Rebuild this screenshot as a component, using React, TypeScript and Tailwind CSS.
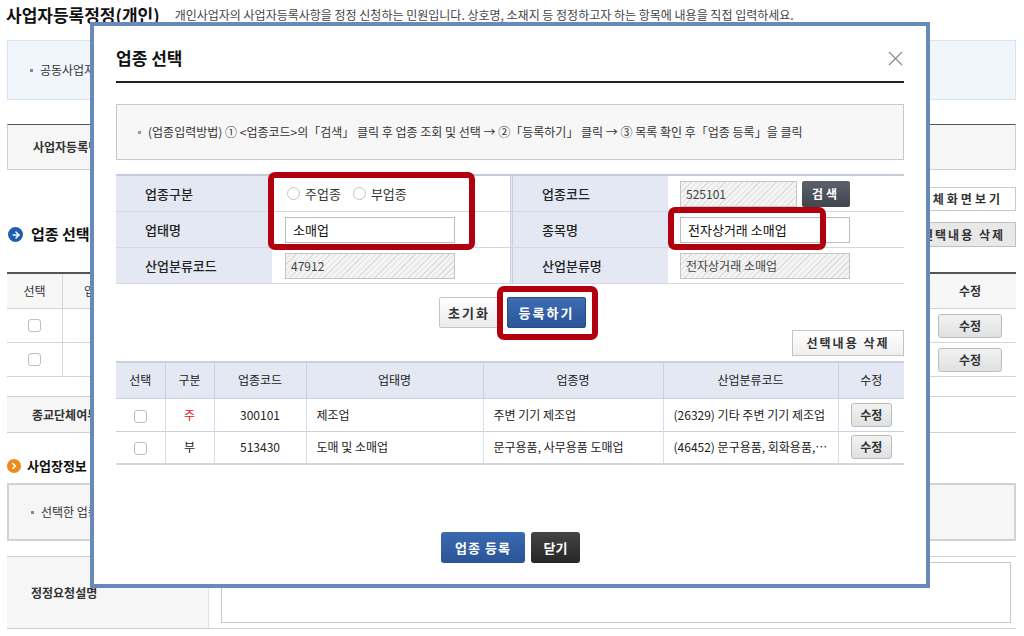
import { ChevronRight, ArrowRight } from 'lucide-react';

const hatch =
  'bg-[repeating-linear-gradient(135deg,#f4f4f4_0px,#f4f4f4_3px,#dddddd_3px,#dddddd_4px)]';

function Checkbox() {
  return <span className="inline-block w-[13px] h-[13px] rounded-[3px] border border-[#bdbdbd] bg-white align-middle" />;
}

function Radio({ label }: { label: string }) {
  return (
    <span className="flex items-center gap-[5px] text-[13px] text-[#333]">
      <span className="inline-block w-[13px] h-[13px] rounded-full border border-[#c4c4c4] bg-white" />
      {label}
    </span>
  );
}

function EditBtn({ className = '' }: { className?: string }) {
  return (
    <button className={`h-[24px] rounded-[3px] border border-[#bcbcbc] bg-[linear-gradient(#f2f2f2,#e0e0e0)] text-[12px] font-bold text-[#333] ${className}`}>
      수정
    </button>
  );
}

function Background() {
  return (
    <div className="pl-[7px] pr-[8px] w-[1024px]">
      {/* page title */}
      <div className="flex items-center h-[30px]">
        <h1 className="text-[17px] font-bold text-[#111] -ml-[1px]">사업자등록정정(개인)</h1>
        <p className="ml-[15px] text-[12px] text-[#444] underline underline-offset-[3px] decoration-[#888]">
          개인사업자의 사업자등록사항을 정정 신청하는 민원입니다. 상호명, 소재지 등 정정하고자 하는 항목에 내용을 직접 입력하세요.
        </p>
      </div>

      {/* info box */}
      <div className="mt-[10px] h-[60px] border border-[#dbe3ef] bg-[#f1f5fc] flex items-center pl-[22px] text-[12px] text-[#333]">
        <span className="w-[3px] h-[3px] bg-[#888] mr-[7px]" />
        공동사업자 정보를 확인하세요.
      </div>

      {/* 사업자등록번호 row */}
      <div className="mt-[24px] h-[46px] border border-[#cfcfcf] border-t-[#555] bg-[#f6f6f6] flex items-center pl-[25px] text-[12px] font-bold text-[#333]">
        사업자등록번호
      </div>

      <div className="mt-[17px] flex justify-end">
        <button className="h-[24px] pl-[10px] pr-[12px] border border-[#c9c9c9] bg-white text-[12px] font-bold tracking-[3px] text-[#333]">
          전체화면보기
        </button>
      </div>

      <div className="mt-[11px] h-[25px] flex items-center justify-between">
        <div className="flex items-center gap-[8px]">
          <span className="w-[15px] h-[15px] rounded-full bg-[#1f5fae] flex items-center justify-center ml-[1px]">
            <ArrowRight size={10} strokeWidth={3.5} color="white" />
          </span>
          <span className="text-[15px] font-bold text-[#111]">업종 선택</span>
        </div>
        <button className="h-[25px] px-[10px] border border-[#c2c2c2] bg-[#e8e8e8] text-[12px] font-bold tracking-[2px] text-[#333]">
          선택내용 삭제
        </button>
      </div>

      {/* background table */}
      <div className="mt-[25px] border-t-2 border-[#555] text-[12px] text-[#333]">
        <div className="grid grid-cols-[56px_1fr_92px] h-[35px] bg-[#f7f7f7] border-b border-[#d5d5d5]">
          <div className="flex items-center justify-center border-r border-[#d5d5d5]">선택</div>
          <div className="flex items-center pl-[21px]">업종코드</div>
          <div className="flex items-center justify-center font-bold">수정</div>
        </div>
        {[0, 1].map((i) => (
          <div key={i} className="grid grid-cols-[56px_1fr_92px] h-[34px] border-b border-[#d5d5d5]">
            <div className="flex items-center justify-center border-r border-[#d5d5d5]">
              <Checkbox />
            </div>
            <div />
            <div className="flex items-center justify-center">
              <EditBtn className="w-[64px]" />
            </div>
          </div>
        ))}
      </div>

      {/* 종교단체여부 */}
      <div className="mt-[19px] h-[37px] border-y border-[#d0d0d0] flex">
        <div className="w-[201px] bg-[#f6f6f6] flex items-center pl-[25px] text-[12px] font-bold text-[#333]">종교단체여부</div>
      </div>

      <div className="mt-[25px] h-[16px] flex items-center gap-[6px]">
        <span className="w-[14px] h-[14px] rounded-full bg-[#f08a1c] flex items-center justify-center">
          <ChevronRight size={10} strokeWidth={4} color="white" />
        </span>
        <span className="text-[13px] font-bold text-[#111]">사업장정보 추가</span>
      </div>

      <div className="mt-[9px] h-[58px] border-2 border-[#d2d2d2] bg-[#f6f6f6] flex items-center pl-[22px] text-[12px] text-[#333]">
        <span className="w-[3px] h-[3px] bg-[#888] mr-[7px]" />
        선택한 업종에 해당하는 사업장 정보를 입력하세요.
      </div>

      {/* 정정요청설명 */}
      <div className="mt-[15px] h-[73px] border-y border-[#d0d0d0] flex">
        <div className="w-[201px] bg-[#f6f6f6] flex items-center pl-[24px] text-[12px] font-bold text-[#333]">정정요청설명</div>
        <div className="flex-1 py-[5px] pl-[12px] pr-[5px] border-l border-[#e2e2e2]">
          <div className="h-full border border-[#c8c8c8] bg-white" />
        </div>
      </div>
    </div>
  );
}

function FormRow({ l1, v1, l2, v2 }: { l1: string; v1: React.ReactNode; l2: string; v2: React.ReactNode }) {
  return (
    <div className="grid grid-cols-[156px_238px_158px_1fr] h-[36px] border-b border-[#d3d9e4]">
      <div className="bg-[#e3e8f3] pl-[29px] flex items-center font-medium text-[#222]">{l1}</div>
      <div className="pl-[13px] flex items-center">{v1}</div>
      <div className="bg-[#e3e8f3] pl-[29px] flex items-center font-medium text-[#222] border-l-[3px] border-double border-[#c6cfdd]">{l2}</div>
      <div className="pl-[12px] flex items-center">{v2}</div>
    </div>
  );
}

function Modal() {
  return (
    <div className="absolute left-[90px] top-[22px] w-[840px] h-[566px] border-4 border-[#6a89bb] bg-white px-[22px]">
      <div className="flex items-center justify-between pt-[20px]">
        <h2 className="text-[17px] leading-[24px] font-bold text-[#111]">업종 선택</h2>
        <svg width="15" height="15" viewBox="0 0 15 15" className="mr-[1px]">
          <path d="M1 1L14 14M14 1L1 14" stroke="#8a8a8a" strokeWidth="1.2" />
        </svg>
      </div>
      <div className="mt-[11px] h-[2px] bg-[#222]" />

      <div className="mt-[21px] h-[56px] border border-[#c9c9c9] bg-[#f7f7f7] flex items-center pl-[21px] text-[12px] text-[#333]">
        <span className="w-[3px] h-[3px] bg-[#999] mr-[7px]" />
        (업종입력방법) ① &lt;업종코드&gt;의「검색」 클릭 후 업종 조회 및 선택 → ②「등록하기」 클릭 → ③ 목록 확인 후「업종 등록」을 클릭
      </div>

      {/* form */}
      <div className="mt-[14px] border-t-2 border-[#c3cddd] text-[13px] text-[#222]">
        <FormRow
          l1="업종구분"
          v1={
            <div className="flex items-center gap-[12px] pl-[2px]">
              <Radio label="주업종" />
              <Radio label="부업종" />
            </div>
          }
          l2="업종코드"
          v2={
            <div className="flex items-center gap-[5px]">
              <div className={`w-[117px] h-[26px] border border-[#c4c4c4] ${hatch} flex items-center pl-[5px] text-[12px] text-[#444]`}>525101</div>
              <button className="w-[48px] h-[26px] rounded-[2px] bg-[linear-gradient(#5b606b,#41454e)] text-[12px] font-bold tracking-[3px] text-white">검색</button>
            </div>
          }
        />
        <FormRow
          l1="업태명"
          v1={<div className="w-[170px] h-[26px] border border-[#bdbdbd] bg-white flex items-center pl-[7px] text-[13px] text-[#111]">소매업</div>}
          l2="종목명"
          v2={<div className="w-[170px] h-[26px] border border-[#bdbdbd] bg-white flex items-center pl-[7px] text-[13px] text-[#111]">전자상거래 소매업</div>}
        />
        <FormRow
          l1="산업분류코드"
          v1={<div className={`w-[170px] h-[26px] border border-[#c4c4c4] ${hatch} flex items-center pl-[5px] text-[12px] text-[#444]`}>47912</div>}
          l2="산업분류명"
          v2={<div className={`w-[170px] h-[26px] border border-[#c4c4c4] ${hatch} flex items-center pl-[5px] text-[12px] text-[#444]`}>전자상거래 소매업</div>}
        />
      </div>

      <div className="mt-[13px] flex justify-center gap-[8px] pl-[5px]">
        <button className="w-[60px] h-[31px] rounded-[2px] border border-[#c4c4c4] bg-[linear-gradient(#ffffff,#ebebeb)] text-[13px] font-bold tracking-[2px] text-[#333]">초기화</button>
        <button className="w-[79px] h-[31px] rounded-[2px] border border-[#244c86] bg-[linear-gradient(#3d6db3,#2a5597)] text-[13px] font-bold tracking-[2px] text-white">등록하기</button>
      </div>

      <div className="mt-[2px] flex justify-end">
        <button className="w-[112px] h-[26px] border border-[#c4c4c4] bg-[linear-gradient(#ffffff,#eeeeee)] text-[12px] font-bold tracking-[2px] text-[#333]">선택내용 삭제</button>
      </div>

      {/* list */}
      <table className="mt-[5px] w-full table-fixed border-collapse text-[12px] text-[#222]">
        <colgroup>
          <col className="w-[49px]" />
          <col className="w-[49px]" />
          <col className="w-[92px]" />
          <col className="w-[177px]" />
          <col className="w-[180px]" />
          <col className="w-[175px]" />
          <col className="w-[66px]" />
        </colgroup>
        <thead>
          <tr className="h-[36px] bg-[#e3e8f3] border-t-2 border-[#333] border-b border-[#c9d1de]">
            {['선택', '구분', '업종코드', '업태명', '업종명', '산업분류코드', '수정'].map((h, i) => (
              <th key={h} className={`font-normal ${i < 6 ? 'border-r border-[#c9d1de]' : ''}`}>{h}</th>
            ))}
          </tr>
        </thead>
        <tbody>
          {[
            { g: '주', red: true, code: '300101', a: '제조업', b: '주변 기기 제조업', c: '(26329) 기타 주변 기기 제조업' },
            { g: '부', red: false, code: '513430', a: '도매 및 소매업', b: '문구용품, 사무용품 도매업', c: '(46452) 문구용품, 회화용품, 사무용품 도매업' },
          ].map((r, i) => (
            <tr key={r.code} className={`h-[33px] ${i === 1 ? 'border-b-2 border-[#d4d8de]' : 'border-b border-[#c9d1de]'}`}>
              <td className="text-center border-r border-[#d9dee7]"><Checkbox /></td>
              <td className={`text-center border-r border-[#d9dee7] ${r.red ? 'text-[#e02020]' : ''}`}>{r.g}</td>
              <td className="text-center border-r border-[#d9dee7]">{r.code}</td>
              <td className="pl-[10px] border-r border-[#d9dee7]">{r.a}</td>
              <td className="pl-[10px] border-r border-[#d9dee7]">{r.b}</td>
              <td className="pl-[10px] pr-[8px] border-r border-[#d9dee7] truncate">{r.c}</td>
              <td className="text-center"><EditBtn className="w-[41px]" /></td>
            </tr>
          ))}
        </tbody>
      </table>

      <div className="mt-[67px] flex justify-center gap-[6px] pl-[1px]">
        <button className="w-[84px] h-[31px] rounded-[3px] bg-[linear-gradient(#3a69b0,#2a5597)] text-[13px] font-bold tracking-[1px] text-white">업종 등록</button>
        <button className="w-[49px] h-[31px] rounded-[3px] bg-[linear-gradient(#444,#262626)] text-[13px] font-bold text-white">닫기</button>
      </div>

      {/* red highlight frames */}
      <div className="absolute left-[174px] top-[146px] w-[207px] h-[78px] border-[6px] border-[#b3000f] rounded-[7px]" />
      <div className="absolute left-[574px] top-[181px] w-[158px] h-[43px] border-[6px] border-[#b3000f] rounded-[7px]" />
      <div className="absolute left-[403px] top-[260px] w-[101px] h-[54px] border-[6px] border-[#b3000f] rounded-[7px]" />
    </div>
  );
}

export default function App() {
  return (
    <div className="relative w-[1024px] h-[636px] overflow-hidden bg-white font-['Noto_Sans_CJK_KR','Noto_Sans',sans-serif]">
      <Background />
      <Modal />
    </div>
  );
}
